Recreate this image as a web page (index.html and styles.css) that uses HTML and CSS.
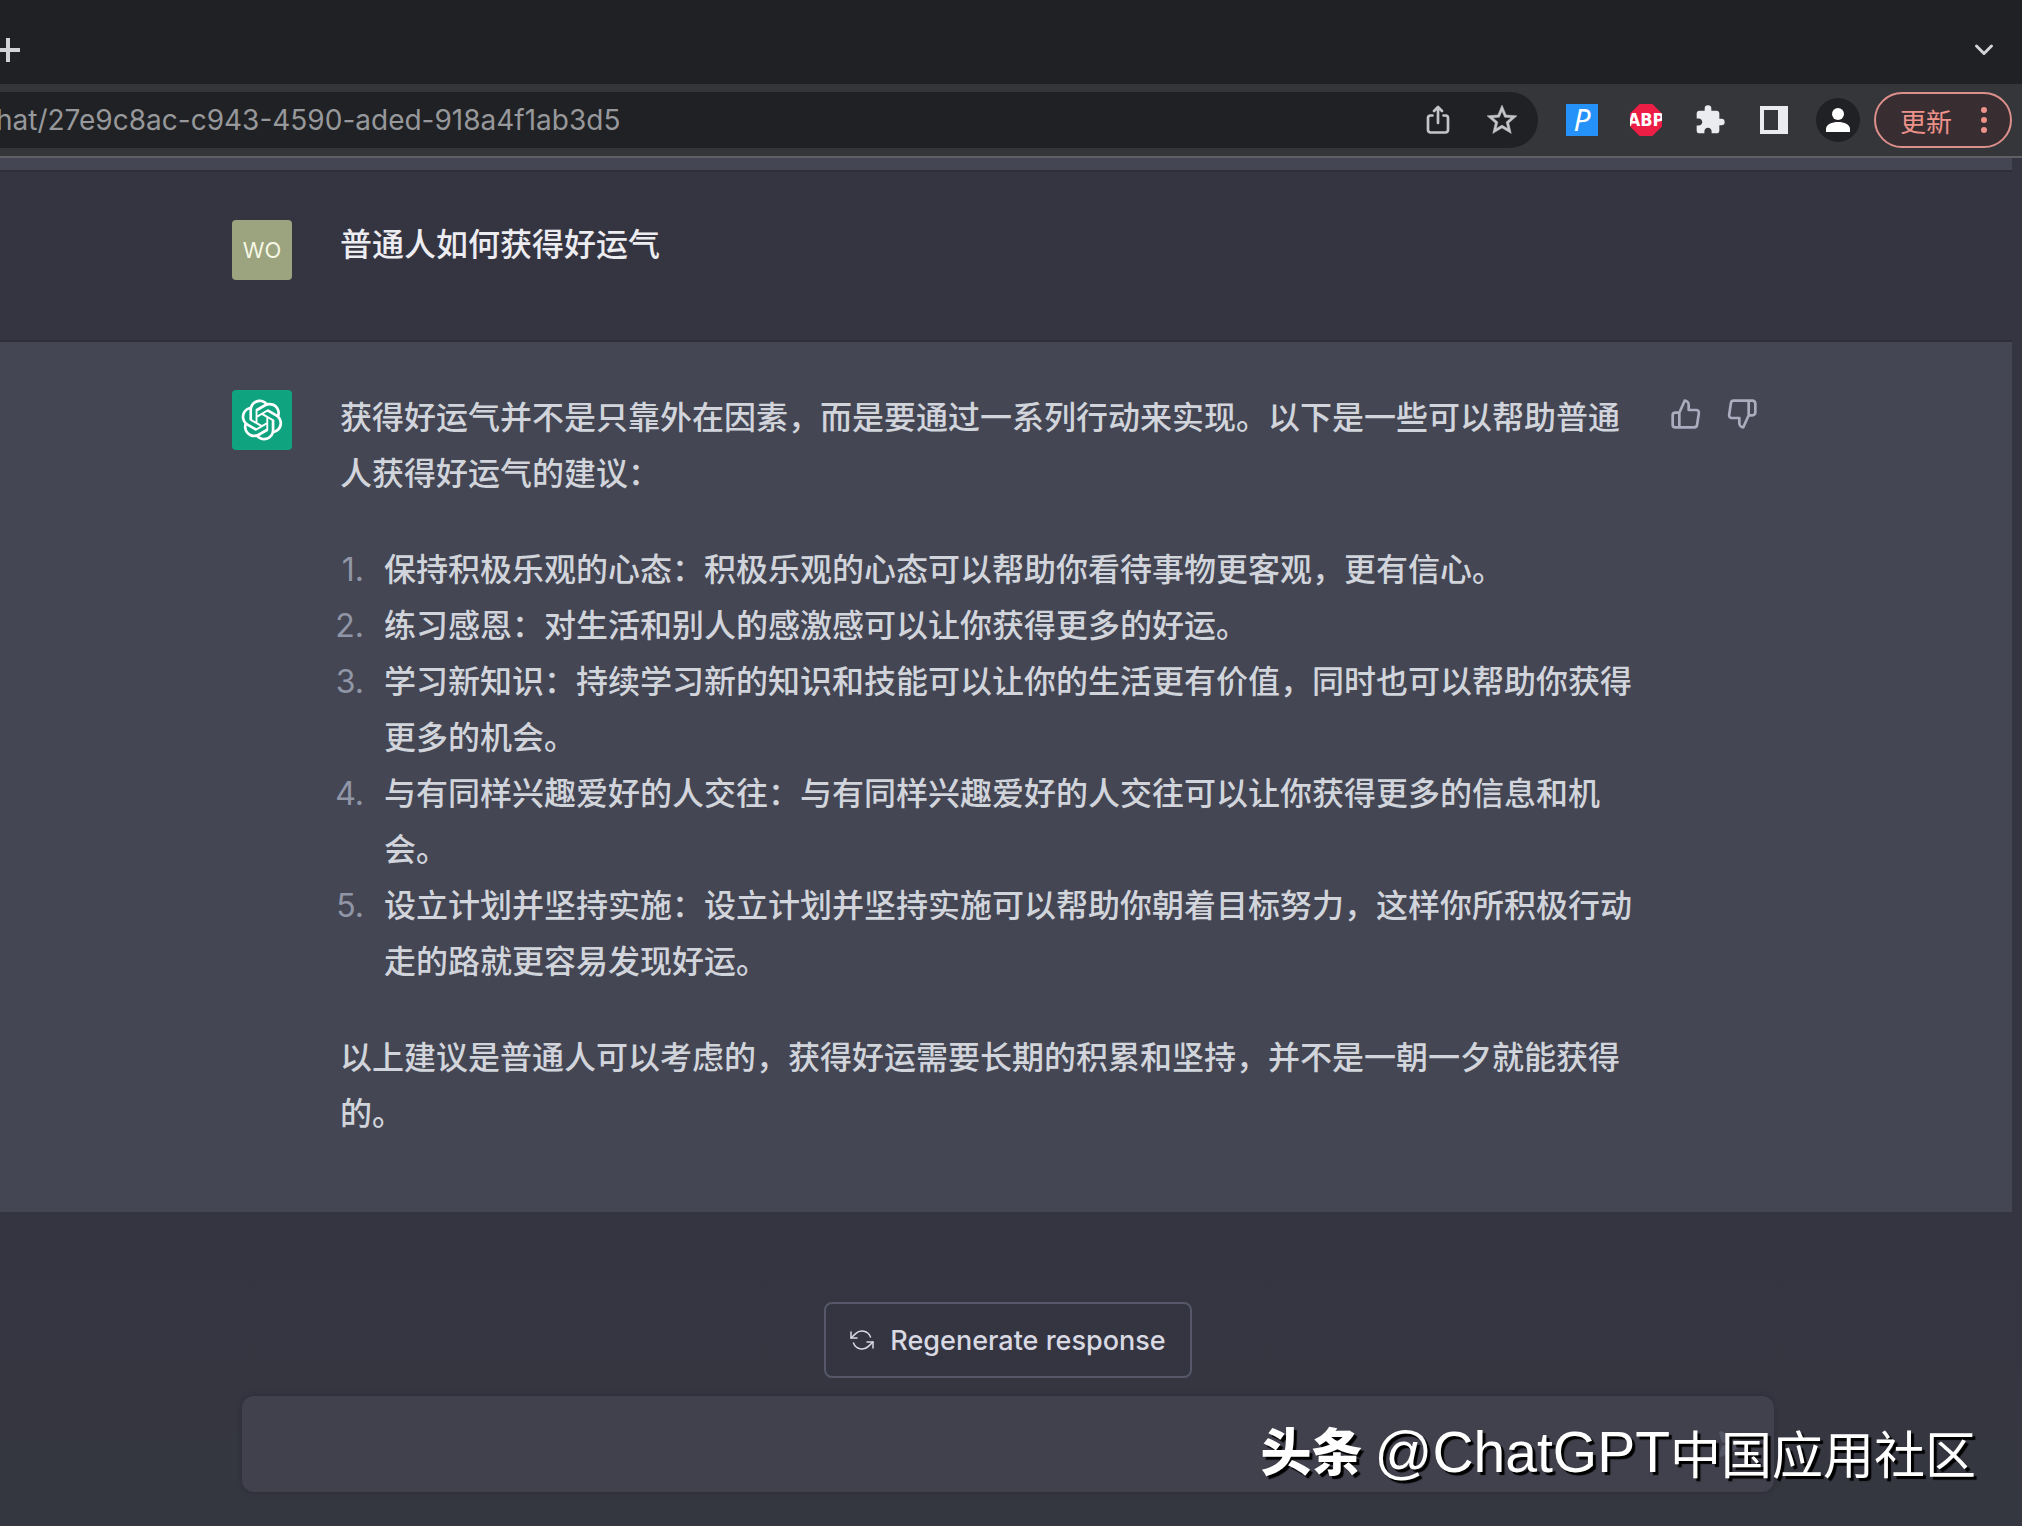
FILE: index.html
```html
<!DOCTYPE html>
<html lang="zh-CN">
<head>
<meta charset="utf-8">
<meta name="viewport" content="width=device-width, initial-scale=1">
<title>ChatGPT</title>
<link rel="stylesheet" href="styles.css">
</head>
<body>
<header class="browser">
  <div class="tabstrip">
    <button class="icon-button new-tab" aria-label="新标签页">
      <svg width="24" height="24" viewBox="0 0 24 24" fill="none" stroke="#d2d3d6" stroke-width="4"><path d="M12 0v24M0 12h24"/></svg>
    </button>
    <button class="icon-button" aria-label="搜索标签页">
      <svg width="20" height="14" viewBox="0 0 20 14" fill="none" stroke="#d2d3d6" stroke-width="3" stroke-linecap="round" stroke-linejoin="round"><path d="M2.500 3L10 10.500L17.500 3"/></svg>
    </button>
  </div>
  <div class="toolbar">
    <div class="omnibox">
      <input class="address" type="text" aria-label="地址" value="hat/27e9c8ac-c943-4590-aded-918a4f1ab3d5">
      <button class="icon-button" aria-label="分享">
        <svg width="28" height="32" viewBox="0 0 28 32" fill="none" stroke="#c4c5c8" stroke-width="2.700" stroke-linecap="round" stroke-linejoin="round"><path d="M8.500 11.500H6.500a2.500 2.500 0 0 0-2.500 2.500V26a2.500 2.500 0 0 0 2.500 2.500H21.500a2.500 2.500 0 0 0 2.500-2.500V14a2.500 2.500 0 0 0-2.500-2.500H19.500M14 19V3.500M10 7L14 3L18 7"/></svg>
      </button>
      <button class="icon-button" aria-label="收藏">
        <svg width="36" height="36" viewBox="0 0 24 24" fill="#c4c5c8" stroke="#c4c5c8" stroke-width=".3"><path d="M22 9.240l-7.190-.62L12 2 9.190 8.630 2 9.240l5.460 4.730L5.820 21 12 17.270 18.180 21l-1.630-7.030L22 9.240zM12 15.400l-3.760 2.270 1-4.280-3.320-2.880 4.380-.38L12 6.100l1.710 4.040 4.380.38-3.320 2.880 1 4.280L12 15.400z"/></svg>
      </button>
    </div>
    <div class="extensions">
      <button class="icon-button ext-p" aria-label="P">P</button>
      <button class="icon-button ext-abp" aria-label="ABP">ABP</button>
      <button class="icon-button" aria-label="扩展程序">
        <svg width="32" height="32" viewBox="0 0 24 24" fill="#ebecef"><path d="M20.500 11H19V7c0-1.100-.9-2-2-2h-4V3.500a2.500 2.500 0 0 0-5 0V5H4c-1.100 0-1.990.9-1.990 2v3.800H3.500c1.490 0 2.700 1.210 2.700 2.700s-1.210 2.700-2.700 2.700H2V20c0 1.100.9 2 2 2h3.800v-1.500c0-1.490 1.210-2.700 2.700-2.700s2.700 1.210 2.700 2.700V22H17c1.100 0 2-.9 2-2v-4h1.500a2.500 2.500 0 0 0 0-5z"/></svg>
      </button>
      <button class="icon-button" aria-label="侧边栏">
        <svg width="32" height="32" viewBox="0 0 32 32"><path fill="#ebecef" fill-rule="evenodd" d="M2 2h28v28H2zM6 6v20h14V6z"/></svg>
      </button>
    </div>
    <button class="icon-button profile" aria-label="个人资料">
      <svg width="28" height="28" viewBox="0 0 28 28" fill="#fff"><circle cx="14" cy="8" r="6"/><path d="M2 26v-3c0-4.500 6-7 12-7s12 2.500 12 7v3z"/></svg>
    </button>
    <button class="update">更新
      <svg width="8" height="28" viewBox="0 0 8 28" fill="#ec928b"><circle cx="4" cy="4" r="3"/><circle cx="4" cy="14" r="3"/><circle cx="4" cy="24" r="3"/></svg>
    </button>
  </div>
</header>

<main class="page">
  <div class="thread">
    <div class="previous-turn"></div>
    <section class="turn turn-user">
      <div class="turn-inner">
        <div class="avatar avatar-user">WO</div>
        <p class="question">普通人如何获得好运气</p>
      </div>
    </section>
    <section class="turn turn-assistant">
      <div class="turn-inner">
        <div class="avatar avatar-bot">
          <svg width="42" height="42" viewBox="0 0 41 41" fill="#fff"><path d="M37.5324 16.8707C37.9808 15.5241 38.1363 14.0974 37.9886 12.6859C37.8409 11.2744 37.3934 9.91076 36.676 8.68622C35.6126 6.83404 33.9882 5.3676 32.0373 4.4985C30.0864 3.62941 27.9098 3.40259 25.8215 3.85078C24.8796 2.7893 23.7219 1.94125 22.4257 1.36341C21.1295 0.785575 19.7249 0.491269 18.3058 0.500197C16.1708 0.495044 14.0893 1.16803 12.3614 2.42214C10.6335 3.67624 9.34853 5.44666 8.6917 7.47815C7.30085 7.76286 5.98686 8.3414 4.8377 9.17505C3.68854 10.0087 2.73073 11.0782 2.02839 12.312C0.956464 14.1591 0.498905 16.2988 0.721698 18.4228C0.944492 20.5467 1.83612 22.5449 3.268 24.1293C2.81966 25.4759 2.66413 26.9026 2.81182 28.3141C2.95951 29.7256 3.40701 31.0892 4.12437 32.3138C5.18791 34.1659 6.8123 35.6322 8.76321 36.5013C10.7141 37.3704 12.8907 37.5973 14.9789 37.1492C15.9208 38.2107 17.0786 39.0587 18.3747 39.6366C19.6709 40.2144 21.0755 40.5087 22.4946 40.4998C24.6307 40.5054 26.7133 39.8321 28.4418 38.5772C30.1704 37.3223 31.4556 35.5506 32.1119 33.5179C33.5027 33.2332 34.8167 32.6547 35.9659 31.821C37.115 30.9874 38.0728 29.9178 38.7752 28.684C39.8458 26.8371 40.3023 24.6979 40.0789 22.5748C39.8556 20.4517 38.9639 18.4544 37.5324 16.8707ZM22.4978 37.8849C20.7443 37.8874 19.0459 37.2733 17.6994 36.1501C17.7601 36.117 17.8666 36.0586 17.936 36.0161L25.9004 31.4156C26.1003 31.3019 26.2663 31.137 26.3813 30.9378C26.4964 30.7386 26.5563 30.5124 26.5549 30.2825V19.0542L29.9213 20.998C29.9389 21.0068 29.9541 21.0198 29.9656 21.0359C29.977 21.052 29.9842 21.0707 29.9867 21.0902V30.3889C29.9842 32.375 29.1946 34.2791 27.7909 35.6841C26.3872 37.0892 24.4838 37.8806 22.4978 37.8849ZM6.39227 31.0064C5.51397 29.4888 5.19742 27.7107 5.49804 25.9832C5.55718 26.0187 5.66048 26.0818 5.73461 26.1244L13.699 30.7248C13.8975 30.8408 14.1233 30.902 14.3532 30.902C14.583 30.902 14.8088 30.8408 15.0073 30.7248L24.731 25.1103V28.9979C24.7321 29.0177 24.7283 29.0376 24.7199 29.0556C24.7115 29.0736 24.6988 29.0893 24.6829 29.1012L16.6317 33.7497C14.9096 34.7416 12.8643 35.0097 10.9447 34.4954C9.02506 33.9811 7.38785 32.7263 6.39227 31.0064ZM4.29707 13.6194C5.17156 12.0998 6.55279 10.9364 8.19885 10.3327C8.19885 10.4013 8.19491 10.5228 8.19491 10.6071V19.808C8.19351 20.0378 8.25334 20.2638 8.36823 20.4629C8.48312 20.6619 8.64893 20.8267 8.84863 20.9404L18.5723 26.5542L15.206 28.4979C15.1894 28.5089 15.1703 28.5155 15.1505 28.5173C15.1307 28.5191 15.1107 28.516 15.0924 28.5082L7.04046 23.8557C5.32135 22.8601 4.06716 21.2235 3.55289 19.3046C3.03862 17.3858 3.30624 15.3413 4.29707 13.6194ZM31.955 20.0556L22.2312 14.4411L25.5976 12.4981C25.6142 12.4872 25.6333 12.4805 25.6531 12.4787C25.6729 12.4769 25.6928 12.4801 25.7111 12.4879L33.7631 17.1364C34.9967 17.849 36.0017 18.8982 36.6606 20.1613C37.3194 21.4244 37.6047 22.849 37.4832 24.2684C37.3617 25.6878 36.8382 27.0432 35.9743 28.1759C35.1103 29.3086 33.9415 30.1717 32.6047 30.6641C32.6047 30.5947 32.6047 30.4733 32.6047 30.3889V21.188C32.6066 20.9586 32.5474 20.7328 32.4332 20.5338C32.319 20.3348 32.154 20.1698 31.955 20.0556ZM35.3055 15.0128C35.2464 14.9765 35.1431 14.9142 35.069 14.8717L27.1045 10.2712C26.906 10.1554 26.6803 10.0943 26.4504 10.0943C26.2206 10.0943 25.9948 10.1554 25.7963 10.2712L16.0726 15.8858V11.9982C16.0715 11.9783 16.0753 11.9585 16.0837 11.9405C16.0921 11.9225 16.1048 11.9068 16.1207 11.8949L24.1719 7.25025C25.4053 6.53903 26.8158 6.19376 28.2383 6.25482C29.6608 6.31589 31.0364 6.78077 32.2044 7.59508C33.3723 8.40939 34.2842 9.53945 34.8334 10.8531C35.3826 12.1667 35.5464 13.6095 35.3055 15.0128ZM14.2424 21.9419L10.8752 19.9981C10.8576 19.9893 10.8423 19.9763 10.8309 19.9602C10.8195 19.9441 10.8122 19.9254 10.8098 19.9058V10.6071C10.8107 9.18295 11.2173 7.78848 11.9819 6.58696C12.7466 5.38544 13.8377 4.42659 15.1275 3.82264C16.4173 3.21869 17.8524 2.99464 19.2649 3.1767C20.6775 3.35876 22.0089 3.93941 23.1034 4.85067C23.0427 4.88379 22.937 4.94215 22.8668 4.98473L14.9024 9.58517C14.7025 9.69878 14.5366 9.86356 14.4215 10.0626C14.3065 10.2616 14.2466 10.4877 14.2479 10.7175L14.2424 21.9419ZM16.071 17.9991L20.4018 15.4978L24.7325 17.9975V22.9985L20.4018 25.4983L16.071 22.9985V17.9991Z"/></svg>
        </div>
        <div class="answer">
          <p>获得好运气并不是只靠外在因素，而是要通过一系列行动来实现。以下是一些可以帮助普通人获得好运气的建议：</p>
          <ol class="tips">
            <li><span>保持积极乐观的心态：积极乐观的心态可以帮助你看待事物更客观，更有信心。</span></li>
            <li><span>练习感恩：对生活和别人的感激感可以让你获得更多的好运。</span></li>
            <li><span>学习新知识：持续学习新的知识和技能可以让你的生活更有价值，同时也可以帮助你获得更多的机会。</span></li>
            <li><span>与有同样兴趣爱好的人交往：与有同样兴趣爱好的人交往可以让你获得更多的信息和机会。</span></li>
            <li><span>设立计划并坚持实施：设立计划并坚持实施可以帮助你朝着目标努力，这样你所积极行动走的路就更容易发现好运。</span></li>
          </ol>
          <p>以上建议是普通人可以考虑的，获得好运需要长期的积累和坚持，并不是一朝一夕就能获得的。</p>
        </div>
        <div class="feedback">
          <button class="icon-button" aria-label="赞">
            <svg width="32" height="32" viewBox="0 0 24 24" fill="none" stroke="#acacbe" stroke-width="2" stroke-linecap="round" stroke-linejoin="round"><path d="M14 9V5a3 3 0 0 0-3-3l-4 9v11h11.280a2 2 0 0 0 2-1.700l1.380-9a2 2 0 0 0-2-2.300zM7 22H4a2 2 0 0 1-2-2v-7a2 2 0 0 1 2-2h3"/></svg>
          </button>
          <button class="icon-button" aria-label="踩">
            <svg width="32" height="32" viewBox="0 0 24 24" fill="none" stroke="#acacbe" stroke-width="2" stroke-linecap="round" stroke-linejoin="round"><path d="M10 15v4a3 3 0 0 0 3 3l4-9V2H5.720a2 2 0 0 0-2 1.700l-1.380 9a2 2 0 0 0 2 2.300zm7-13h2.670A2.310 2.310 0 0 1 22 4v7a2.310 2.310 0 0 1-2.330 2H17"/></svg>
          </button>
        </div>
      </div>
    </section>
  </div>

  <form class="composer">
    <button type="button" class="regenerate">
      <svg width="24" height="24" viewBox="0 0 24 24" fill="none" stroke="#d9d9e3" stroke-width="1.500" stroke-linecap="round" stroke-linejoin="round"><path d="M1 4v6h6M23 20v-6h-6"/><path d="M20.490 9A9 9 0 0 0 5.640 5.640L1 10m22 4l-4.640 4.360A9 9 0 0 1 3.510 15"/></svg>
      Regenerate response
    </button>
    <div class="prompt-box">
      <textarea class="prompt" rows="1" aria-label="消息"></textarea>
      <button type="button" class="icon-button" aria-label="发送">
        <svg width="32" height="32" viewBox="0 0 20 20" fill="#555665"><path d="M10.894 2.553a1 1 0 0 0-1.788 0l-7 14a1 1 0 0 0 1.169 1.409l5-1.429A1 1 0 0 0 9 15.571V11a1 1 0 1 1 2 0v4.571a1 1 0 0 0 .725.962l5 1.428a1 1 0 0 0 1.170-1.408l-7-14z" transform="rotate(90 10 10)"/></svg>
      </button>
    </div>
  </form>
  <div class="watermark"><strong>头条</strong><span class="handle">@ChatGPT</span><span>中国应用社区</span></div>
</main>
</body>
</html>
```
FILE: styles.css
```css
* {
  box-sizing: border-box;
}

body {
  margin: 0;
  min-height: 100vh;
  display: flex;
  flex-direction: column;
  background: #343541;
  color: #d1d5db;
  font-family: Inter, "Noto Sans CJK SC", sans-serif;
  text-spacing-trim: space-all;
}

p,
ol {
  margin: 0;
}

svg {
  display: block;
}

button,
input,
textarea {
  border: 0;
  padding: 0;
  background: none;
  color: inherit;
  font: inherit;
}

.icon-button {
  display: flex;
  align-items: center;
  justify-content: center;
  flex: none;
}

/* Browser chrome */
.tabstrip {
  display: flex;
  align-items: center;
  justify-content: space-between;
  height: 84px;
  padding: 16px 28px 0 0;
  background: #202124;
}

.new-tab {
  margin-left: -4px;
}

.toolbar {
  display: flex;
  align-items: center;
  height: 74px;
  padding-right: 10px;
  background: #35363a;
  border-bottom: 2px solid #5f6064;
}

.omnibox {
  flex: 1;
  display: flex;
  align-items: center;
  gap: 32px;
  height: 56px;
  padding-right: 18px;
  overflow: hidden;
  background: #202124;
  border-radius: 0 28px 28px 0;
}

.address {
  flex: 1;
  min-width: 0;
  margin-left: -4px;
  color: #97989b;
  font-family: Inter, sans-serif;
  font-size: 28px;
}

.extensions {
  display: flex;
  gap: 32px;
  margin: 0 26px 0 28px;
}

.ext-p,
.ext-abp {
  width: 32px;
  height: 32px;
  color: #fff;
}

.ext-p {
  background: #2492f8;
  font: italic 30px/32px "Noto Sans", sans-serif;
}

.ext-abp {
  background: #ed1e45;
  clip-path: polygon(30% 0, 70% 0, 100% 30%, 100% 70%, 70% 100%, 30% 100%, 0 70%, 0 30%);
  font: bold 18px/32px "Liberation Sans Narrow", "DejaVu Sans Condensed", sans-serif;
}

.profile {
  width: 44px;
  height: 44px;
  margin-right: 14px;
  border-radius: 50%;
  background: #202124;
}

.update {
  display: flex;
  align-items: center;
  justify-content: space-between;
  width: 138px;
  height: 56px;
  padding: 0 22px 0 24px;
  border: 2px solid #dc8f8b;
  border-radius: 28px;
  background: #382d30;
  color: #ec928b;
  font-size: 26px;
}

/* Conversation */
.page {
  position: relative;
  flex: 1;
  display: flex;
  flex-direction: column;
}

.thread {
  margin-right: 10px;
}

.previous-turn {
  height: 12px;
  background: #444654;
}

.turn {
  border-top: 2px solid #2d2e39;
  padding: 48px 0 60px 4px;
}

.turn-assistant {
  padding-bottom: 70px;
  background: #444654;
}

.turn-inner {
  display: flex;
  align-items: flex-start;
  max-width: 1552px;
  margin: 0 auto;
}

.avatar {
  flex: none;
  display: flex;
  align-items: center;
  justify-content: center;
  width: 60px;
  height: 60px;
  margin-right: 48px;
  border-radius: 4px;
}

.avatar-user {
  background: #9ca37f;
  color: #f4f7e4;
  font-size: 22px;
}

.avatar-bot {
  background: #10a37f;
}

.question {
  color: #ececf1;
  font-size: 32px;
  font-weight: 500;
  line-height: 50px;
}

.answer {
  flex: 0 1 1300px;
  display: flex;
  flex-direction: column;
  gap: 40px;
  font-size: 32px;
  font-weight: 500;
  line-height: 56px;
}

.tips {
  padding: 0;
  list-style: none;
  counter-reset: tip;
}

.tips li {
  display: grid;
  grid-template-columns: 24px 1fr;
  column-gap: 20px;
  counter-increment: tip;
}

.tips li::before {
  content: counter(tip) ".";
  justify-self: end;
  color: #9196a6;
  font-family: Inter, sans-serif;
  font-weight: 400;
}

.feedback {
  display: flex;
  gap: 24px;
  margin: 8px 0 0 30px;
}

/* Composer */
.composer {
  flex: 1;
  display: flex;
  flex-direction: column;
  align-items: center;
  gap: 18px;
  padding: 90px 10px 32px 4px;
  background: linear-gradient(#353541 20%, #353740);
}

.regenerate {
  display: flex;
  align-items: center;
  gap: 16px;
  height: 76px;
  padding: 0 24px;
  border: 2px solid #565869;
  border-radius: 8px;
  background: #343541;
  color: #d9d9e3;
  font-size: 27px;
  font-weight: 500;
}

.prompt-box {
  display: flex;
  align-items: center;
  width: 100%;
  max-width: 1532px;
  min-height: 96px;
  padding: 0 26px;
  border-radius: 12px;
  background: #40414d;
  box-shadow: 0 0 4px 2px #2f303b;
}

.prompt {
  flex: 1;
  height: 48px;
  resize: none;
  font-size: 32px;
  line-height: 48px;
}

/* Overlaid account mark */
.watermark {
  position: absolute;
  right: 46px;
  bottom: 36px;
  display: flex;
  align-items: flex-start;
  color: #fff;
  font: 400 51px/76px "Noto Sans CJK SC", sans-serif;
  text-shadow: 3px 3px 1px #000;
  white-space: nowrap;
}

.watermark strong {
  margin-right: 12px;
  font-weight: 900;
  line-height: 70px;
}

.handle {
  font-family: "Liberation Sans", sans-serif;
  font-size: 57px;
}
```
